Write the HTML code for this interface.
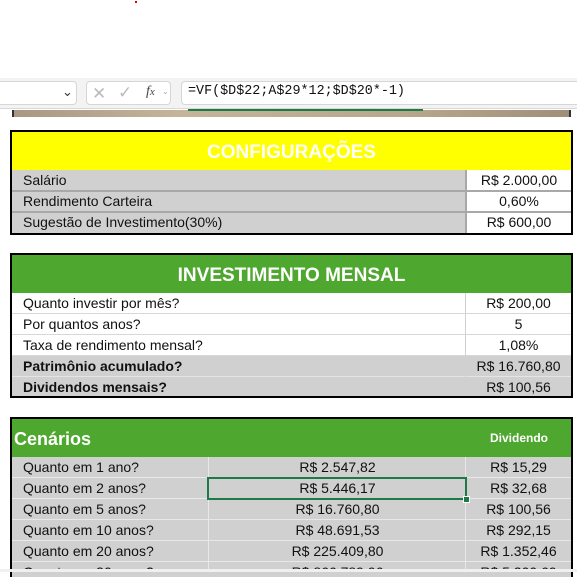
<!DOCTYPE html>
<html><head><meta charset="utf-8"><style>
*{margin:0;padding:0;box-sizing:border-box}
body{width:577px;height:572px;overflow:hidden;background:#fff;position:relative;font-family:"Liberation Sans",sans-serif;font-size:14px;color:#111}
.a{position:absolute}
.box{position:absolute;background:#fff;border:1px solid #d6d6d6;border-radius:4px}
.cell{position:absolute;height:21px;line-height:21px;white-space:nowrap;overflow:hidden}
.g{background:#d0d0d0}
.w{background:#fff}
.c{text-align:center}
.l{padding-left:11px}
.b{font-weight:bold}
.hl{position:absolute;height:1px;background:#b8b8b8}
.vl{position:absolute;width:1px;background:#b8b8b8}
</style></head><body>
<div class="a" style="left:135px;top:1px;width:2px;height:2px;background:#e00"></div>
<div class="a" style="left:0;top:78px;width:577px;height:31px;background:#f3f3f3;border-bottom:1px solid #d8d8d8"></div>
<div class="box" style="left:-4px;top:81px;width:81px;height:24px"></div>
<div class="a" style="left:62px;top:84px;font-size:13px;color:#333">&#8964;</div>
<div class="box" style="left:86px;top:81px;width:85px;height:24px"></div>
<div class="a" style="left:92px;top:84px;font-size:17px;color:#bbb">&#10005;</div>
<div class="a" style="left:118px;top:83px;font-size:17px;color:#bbb">&#10003;</div>
<div class="a" style="left:146px;top:84px;font-size:14px;font-style:italic;font-family:'Liberation Serif',serif;color:#444">f<span style="font-size:11px">x</span></div>
<div class="a" style="left:162px;top:87px;font-size:8px;color:#aaa">&#8964;</div>
<div class="box" style="left:181px;top:81px;width:400px;height:24px"></div>
<div class="a" style="left:188px;top:84px;font-family:'Liberation Mono',monospace;font-size:13.4px;color:#111">=VF($D$22;A$29*12;$D$20*-1)</div>
<div class="a" style="left:12px;top:110px;width:559px;height:7px;background:linear-gradient(90deg,#a89880,#c4b49a 30%,#b9a78c 70%,#a08f78)"></div>
<div class="a" style="left:12px;top:110px;width:2px;height:7px;background:#333"></div>
<div class="a" style="left:569px;top:110px;width:2px;height:7px;background:#333"></div>
<div class="a" style="left:188px;top:109px;width:235px;height:2px;background:#1e7a45"></div>

<!-- CONFIG -->
<div class="a" style="left:10px;top:130px;width:563px;height:105px;border:2px solid #000;background:#fff"></div>
<div class="a c" style="left:12px;top:132px;width:559px;height:38px;background:#ff0;color:#fff;font-size:19px;font-weight:bold;line-height:42px">CONFIGURAÇÕES</div>
<div class="cell g l" style="left:12px;top:170px;width:454px">Salário</div>
<div class="cell w c" style="left:467px;top:170px;width:104px">R$ 2.000,00</div>
<div class="cell g l" style="left:12px;top:191px;width:454px">Rendimento Carteira</div>
<div class="cell w c" style="left:467px;top:191px;width:104px">0,60%</div>
<div class="cell g l" style="left:12px;top:212px;width:454px">Sugestão de Investimento(30%)</div>
<div class="cell w c" style="left:467px;top:212px;width:104px">R$ 600,00</div>
<div class="hl" style="left:12px;top:190px;width:559px;height:2px;background:#a8a8a8"></div>
<div class="hl" style="left:12px;top:211px;width:559px;height:2px;background:#a8a8a8"></div>
<div class="vl" style="left:465px;top:170px;height:63px;width:2px;background:#a8a8a8"></div>

<!-- INVEST -->
<div class="a" style="left:10px;top:253px;width:563px;height:145px;border:2px solid #000;background:#fff"></div>
<div class="a c" style="left:12px;top:255px;width:559px;height:38px;background:#4ea72e;color:#fff;font-size:19px;font-weight:bold;line-height:42px">INVESTIMENTO MENSAL</div>
<div class="cell w l" style="left:12px;top:293px;width:453px">Quanto investir por mês?</div>
<div class="cell w c" style="left:466px;top:293px;width:105px">R$ 200,00</div>
<div class="cell w l" style="left:12px;top:314px;width:453px">Por quantos anos?</div>
<div class="cell w c" style="left:466px;top:314px;width:105px">5</div>
<div class="cell w l" style="left:12px;top:335px;width:453px">Taxa de rendimento mensal?</div>
<div class="cell w c" style="left:466px;top:335px;width:105px">1,08%</div>
<div class="cell g l b" style="left:12px;top:356px;width:453px">Patrimônio acumulado?</div>
<div class="cell g c" style="left:466px;top:356px;width:105px">R$ 16.760,80</div>
<div class="cell g l b" style="left:12px;top:377px;width:453px;height:19px">Dividendos mensais?</div>
<div class="cell g c" style="left:466px;top:377px;width:105px;height:19px">R$ 100,56</div>
<div class="hl" style="left:12px;top:313px;width:559px;background:#d8d8d8"></div>
<div class="hl" style="left:12px;top:334px;width:559px;background:#d8d8d8"></div>
<div class="hl" style="left:12px;top:355px;width:559px;background:#d8d8d8"></div>
<div class="hl" style="left:12px;top:376px;width:559px;background:#e4e4e4"></div>
<div class="vl" style="left:465px;top:293px;height:103px;background:#d0d0d0"></div>

<!-- CENARIOS -->
<div class="a" style="left:10px;top:417px;width:563px;height:160px;border:2px solid #000;border-bottom:none;background:#d0d0d0"></div>
<div class="a" style="left:12px;top:419px;width:559px;height:38px;background:#4ea72e"></div>
<div class="a b" style="left:14px;top:429px;color:#fff;font-size:18px">Cenários</div>
<div class="a b" style="left:490px;top:431px;color:#fff;font-size:12px">Dividendo</div>
<div class="cell l" style="left:12px;top:457px">Quanto em 1 ano?</div>
<div class="cell c" style="left:209px;top:457px;width:257px">R$ 2.547,82</div>
<div class="cell c" style="left:466px;top:457px;width:105px">R$ 15,29</div>
<div class="cell l" style="left:12px;top:478px">Quanto em 2 anos?</div>
<div class="cell c" style="left:209px;top:478px;width:257px">R$ 5.446,17</div>
<div class="cell c" style="left:466px;top:478px;width:105px">R$ 32,68</div>
<div class="cell l" style="left:12px;top:499px">Quanto em 5 anos?</div>
<div class="cell c" style="left:209px;top:499px;width:257px">R$ 16.760,80</div>
<div class="cell c" style="left:466px;top:499px;width:105px">R$ 100,56</div>
<div class="cell l" style="left:12px;top:520px">Quanto em 10 anos?</div>
<div class="cell c" style="left:209px;top:520px;width:257px">R$ 48.691,53</div>
<div class="cell c" style="left:466px;top:520px;width:105px">R$ 292,15</div>
<div class="cell l" style="left:12px;top:541px">Quanto em 20 anos?</div>
<div class="cell c" style="left:209px;top:541px;width:257px">R$ 225.409,80</div>
<div class="cell c" style="left:466px;top:541px;width:105px">R$ 1.352,46</div>
<div class="cell l" style="left:12px;top:562px;height:8px">Quanto em 30 anos?</div>
<div class="cell c" style="left:209px;top:562px;width:257px;height:8px">R$ 866.789,96</div>
<div class="cell c" style="left:466px;top:562px;width:105px;height:8px">R$ 5.200,69</div>
<div class="hl" style="left:12px;top:477px;width:559px;background:#e8e8e8"></div>
<div class="hl" style="left:12px;top:498px;width:559px;background:#e8e8e8"></div>
<div class="hl" style="left:12px;top:519px;width:559px;background:#e8e8e8"></div>
<div class="hl" style="left:12px;top:540px;width:559px;background:#e8e8e8"></div>
<div class="hl" style="left:12px;top:561px;width:559px;background:#e8e8e8"></div>
<div class="vl" style="left:208px;top:457px;height:115px;background:#e8e8e8"></div>
<div class="vl" style="left:465px;top:457px;height:115px;background:#e8e8e8"></div>
<div class="a" style="left:207px;top:477px;width:260px;height:23px;border:2px solid #1e7a45"></div>
<div class="a" style="left:464px;top:497px;width:5px;height:5px;background:#1e7a45;outline:1px solid #fff"></div>
<div class="a" style="left:0;top:569px;width:577px;height:3px;background:#f0f0f0"></div>
</body></html>
